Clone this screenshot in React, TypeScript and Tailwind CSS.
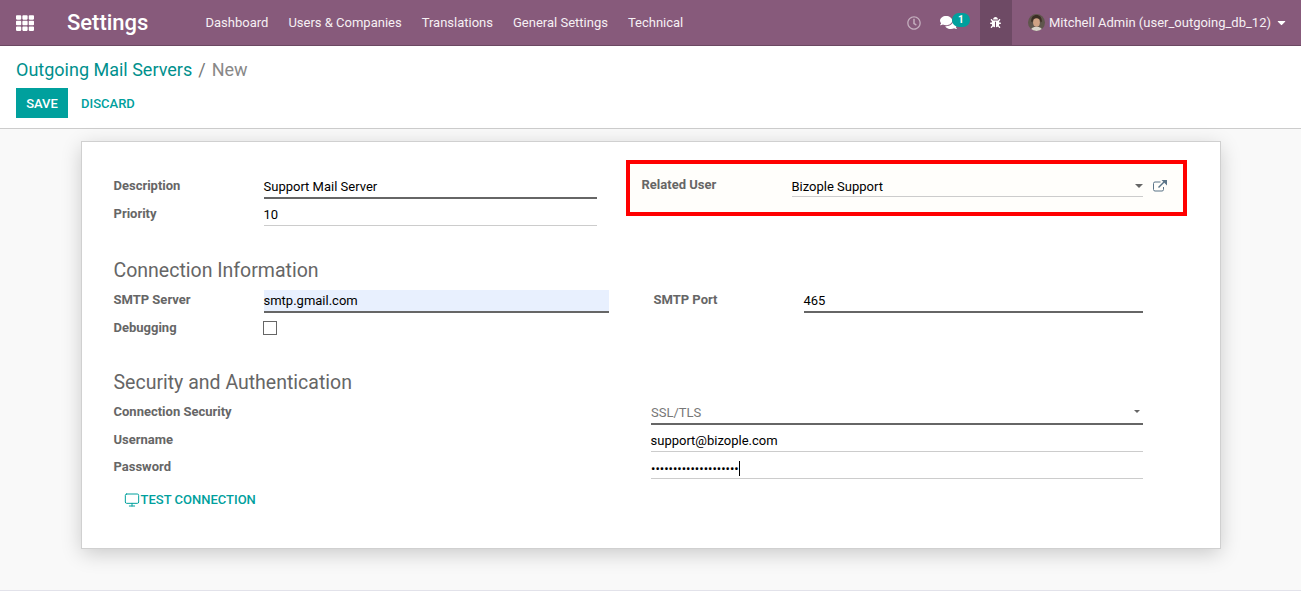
import { FaBug, FaCaretDown, FaComments, FaRegClock, FaTh } from "react-icons/fa";
import { Monitor } from "lucide-react";

const menus = ["Dashboard", "Users & Companies", "Translations", "General Settings", "Technical"];

function Avatar() {
  return (
    <svg width="17" height="17" viewBox="0 0 16 16" className="rounded-full">
      <rect width="16" height="16" fill="#5f564c" />
      <path d="M3 7c0-4 2-6 5-6s5 2 5 6l-1 1-1-3H5L4 8z" fill="#3b2e24" />
      <ellipse cx="8" cy="8" rx="3.2" ry="4" fill="#cfa284" />
      <path d="M2 16c1-3 3-4 6-4s5 1 6 4z" fill="#d9d4ca" />
    </svg>
  );
}

function ExternalLinkIcon() {
  return (
    <svg width="14" height="12" viewBox="0 0 14 12" className="ml-[10px] mt-[8px] text-[#5b7488]">
      <path d="M10.5 7v2.5a1.5 1.5 0 0 1-1.5 1.5H2A1.5 1.5 0 0 1 .5 9.500V3.500A1.500 1.500 0 0 1 2 2h5.500" fill="none" stroke="currentColor" />
      <path d="M5.500 7.500 11 2" fill="none" stroke="currentColor" strokeWidth="1.400" />
      <path d="M8.500 0H14V5.500z" fill="currentColor" />
    </svg>
  );
}

function Field({ value, strong, className }: { value: string; strong?: boolean; className?: string }) {
  return (
    <div
      className={`h-[27px] pt-[6px] leading-[18px] indent-[-0.5px] text-black ${strong ? "border-b-2 border-[#666666]" : "border-b border-[#cccccc]"} ${className ?? ""}`}
    >
      {value}
    </div>
  );
}

function Label({ children, className }: { children: string; className?: string }) {
  return <div className={`font-bold text-[#666666] leading-[18px] indent-[-0.5px] ${className ?? ""}`}>{children}</div>;
}

export default function App() {
  return (
    <div className="h-[591px] flex flex-col overflow-hidden bg-white text-[13px] font-['Roboto',sans-serif]">
      <nav className="h-[46px] shrink-0 flex items-stretch bg-[#875a7b] border-b border-[#6b4862] text-white">
        <div className="w-[67px] pl-[16px] flex items-center">
          <FaTh size={18} />
        </div>
        <div className="w-[129px] flex items-center text-[22px] font-medium">Settings</div>
        <div className="flex items-center gap-[20px] pl-[9.5px] text-[#f6f0f4]">
          {menus.map((m) => (
            <span key={m}>{m}</span>
          ))}
        </div>
        <div className="ml-auto flex items-stretch">
          <div className="w-[33px] flex items-center justify-start">
            <FaRegClock size={14} className="text-white/50" />
          </div>
          <div className="relative w-[40px] flex items-center">
            <FaComments size={17} />
            <span className="absolute left-[12px] top-[13px] w-[18px] h-[14px] rounded-full bg-[#00a09d] text-[10px] font-bold leading-[14px] text-center">
              1
            </span>
          </div>
          <div className="w-[32px] flex items-center justify-center bg-[#6e4a65]">
            <FaBug size={11} />
          </div>
          <div className="flex items-center pl-[16px] pr-[13px] gap-[4px]">
            <Avatar />
            <span className="text-[#f6f0f4]">Mitchell Admin (user_outgoing_db_12)</span>
            <FaCaretDown size={13} />
          </div>
        </div>
      </nav>

      <header className="h-[83px] shrink-0 px-[16px] border-b border-[#cccccc]">
        <div className="h-[42px] pt-[10px] text-[18px] leading-[27px]">
          <span className="text-[#00908d]">Outgoing Mail Servers</span>
          <span className="text-[#777777] mx-[6px]">/</span>
          <span className="text-[#888888]">New</span>
        </div>
        <div className="flex items-center">
          <button className="w-[52px] h-[30px] pt-[2px] bg-[#00a09d] text-white font-medium">SAVE</button>
          <button className="ml-[13px] pt-[2px] text-[#00a09d] font-medium">DISCARD</button>
        </div>
      </header>

      <main className="flex-1 bg-[#f9f9f9] border-b border-[#e2e2ea] pt-[12px] pl-[81px]">
        <div className="w-[1140px] h-[408px] bg-white border border-[#d0d0d0] shadow-[0_5px_20px_-1px_rgba(0,0,0,0.2)] pl-[32px] pt-[18px]">
          <div className="flex">
            <div className="w-[483px] pt-[12px]">
              <div className="flex">
                <Label className="w-[150px] pt-[5px]">Description</Label>
                <Field value="Support Mail Server" strong className="flex-1" />
              </div>
              <div className="flex mt-[1px]">
                <Label className="w-[150px] pt-[5px]">Priority</Label>
                <Field value="10" className="flex-1 !h-[26px]" />
              </div>
            </div>
            <div className="ml-[29px] w-[561px] h-[56px] border-[4px] border-[#ff0000] bg-[#fffefb] pl-[12px] pt-[8px] flex">
              <Label className="w-[150px] pt-[4px]">Related User</Label>
              <div className="relative w-[351px] h-[25px] pt-[6px] leading-[18px] indent-[-0.5px] text-black border-b border-[#cccccc]">
                Bizople Support
                <span className="absolute right-[0px] top-[12px] border-x-[4px] border-t-[4px] border-x-transparent border-t-[#666666]" />
              </div>
              <ExternalLinkIcon />
            </div>
          </div>

          <h2 className="mt-[31px] text-[19.5px] font-normal leading-[28px] indent-[-0.5px] text-[#666666]">Connection Information</h2>
          <div className="flex mt-[1px]">
            <Label className="w-[150px] pt-[5px]">SMTP Server</Label>
            <Field value="smtp.gmail.com" strong className="w-[345px] !h-[23px] mt-[4px] !pt-[2px] bg-[#e8f0fe]" />
            <Label className="ml-[45px] w-[150px] pt-[5px]">SMTP Port</Label>
            <Field value="465" strong className="w-[339px]" />
          </div>
          <div className="flex mt-[1px] h-[27px]">
            <Label className="w-[149px] pt-[5px]">Debugging</Label>
            <div className="mt-[7px] w-[14px] h-[14px] border border-[#666666] bg-white" />
          </div>

          <h2 className="mt-[28px] text-[19.5px] font-normal leading-[28px] indent-[-0.5px] text-[#666666]">Security and Authentication</h2>
          <div className="flex mt-[3px]">
            <div className="w-[537px]">
              <Label className="h-[28px] pt-[3px]">Connection Security</Label>
              <Label className="h-[27px] pt-[3px]">Username</Label>
              <Label className="h-[27px] pt-[3px]">Password</Label>
              <button className="flex items-center ml-[10px] mt-[8px] text-[#00a09d] font-medium">
                <Monitor size={16} strokeWidth={1.5} className="mr-[0.5px]" />
                TEST CONNECTION
              </button>
            </div>
            <div className="w-[492px]">
              <div className="relative h-[25px] pt-[4px] leading-[18px] text-[#777777] border-b-2 border-[#666666]">
                SSL/TLS
                <span className="absolute right-[3px] top-[10px] border-x-[3px] border-t-[3px] border-x-transparent border-t-[#666666]" />
              </div>
              <Field value="support@bizople.com" className="!pt-[7px]" />
              <div className="h-[27px] pt-[9px] flex items-start leading-[15px] text-black border-b border-[#cccccc]">
                <span>{"•".repeat(20)}</span>
                <span className="w-px h-[15px] bg-black" />
              </div>
            </div>
          </div>
        </div>
      </main>
    </div>
  );
}
